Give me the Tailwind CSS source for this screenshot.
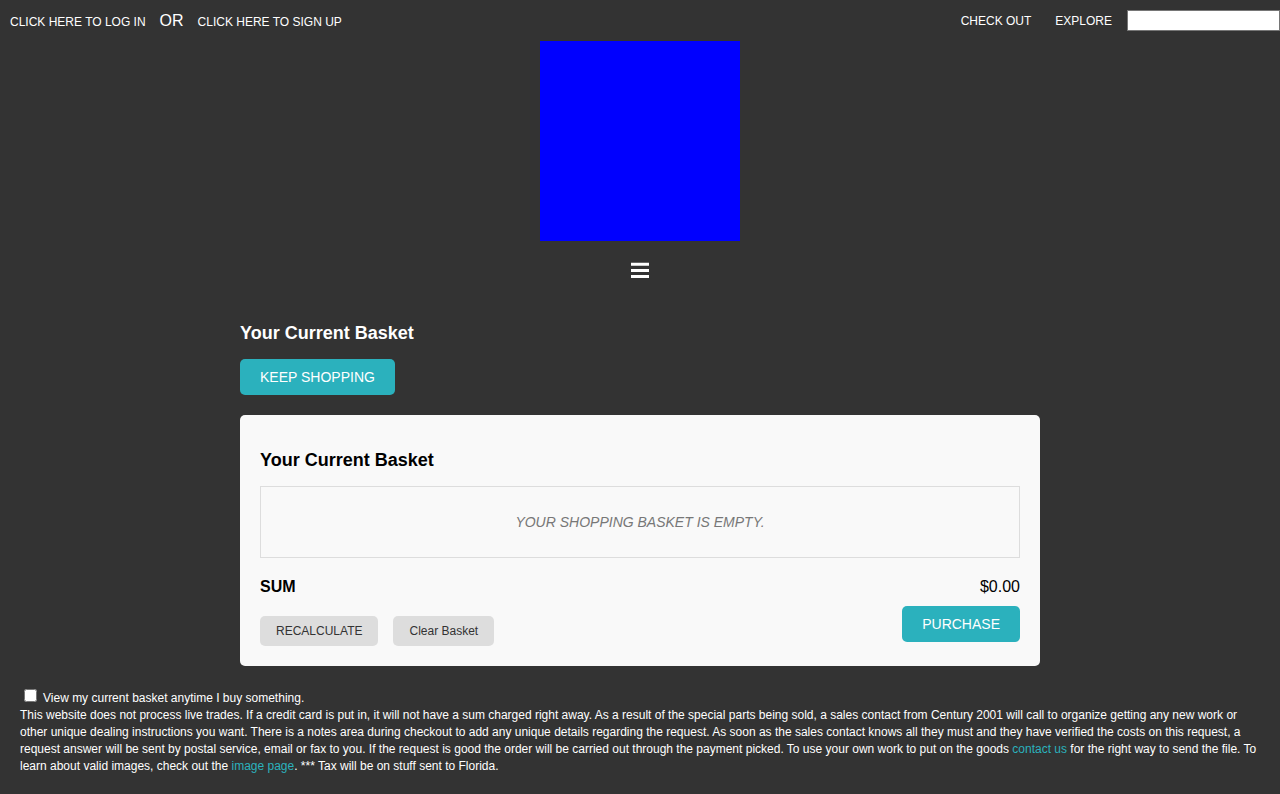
<!DOCTYPE html>
<html lang="en">
<head>
<meta charset="utf-8">
<meta name="viewport" content="width=device-width, initial-scale=1">
<title>Your Current Basket</title>
<script src="https://cdn.jsdelivr.net/npm/@tailwindcss/browser@4"></script>
</head>
<body class="min-h-screen bg-[#333] font-['Liberation_Sans',Arial,sans-serif] text-base text-white">
<header>
  <div class="flex h-[41px] items-center justify-between">
    <div class="flex items-baseline gap-[14px] pl-[10px]">
      <a href="#" class="text-xs">CLICK HERE TO LOG IN</a>
      <span>OR</span>
      <a href="#" class="text-xs">CLICK HERE TO SIGN UP</a>
    </div>
    <div class="flex items-center text-xs">
      <a href="#" class="mr-6">CHECK OUT</a>
      <a href="#" class="mr-[15px]">EXPLORE</a>
      <input type="text" aria-label="Search" class="h-[21px] w-[153px] border border-[#767676] bg-white px-0.5 text-black">
    </div>
  </div>
  <div class="mx-auto size-[200px] bg-[#00f]"></div>
  <div class="flex justify-center pt-5">
    <button type="button" aria-label="Menu" class="flex h-5 w-[18px] items-start">
      <svg width="18" height="18" viewBox="0 0 18 18" fill="#fff" aria-hidden="true"><path d="M0 1.7h18v3.1H0zM0 8h18v3H0zM0 14h18v3H0z"/></svg>
    </button>
  </div>
</header>
<main>
  <div class="mx-auto max-w-[800px] pt-10">
    <h1 class="text-lg leading-6 font-bold">Your Current Basket</h1>
    <a href="#" class="mt-[14px] inline-block rounded-[5px] bg-[#2bb1bd] px-5 py-2 align-top text-sm leading-5">KEEP SHOPPING</a>
    <section class="mt-5 rounded-[5px] bg-[#f9f9f9] p-5 text-black">
      <h2 class="pt-[13px] text-lg leading-6 font-bold">Your Current Basket</h2>
      <div class="mt-[14px] border border-[#ddd] py-[25px] text-center text-sm leading-5 text-[#777] italic">YOUR SHOPPING BASKET IS EMPTY.</div>
      <div class="mt-[18px] flex justify-between leading-[22px]">
        <strong>SUM</strong>
        <span>$0.00</span>
      </div>
      <div class="mt-2 flex items-start justify-between">
        <div class="flex gap-[15px] pt-[10px] text-xs leading-4 text-[#333]">
          <button type="button" class="rounded-[5px] bg-[#ddd] px-4 py-[7px]">RECALCULATE</button>
          <button type="button" class="rounded-[5px] bg-[#ddd] px-4 py-[7px]">Clear Basket</button>
        </div>
        <button type="button" class="rounded-[5px] bg-[#2bb1bd] px-5 py-2 text-sm leading-5 text-white">PURCHASE</button>
      </div>
    </section>
  </div>
  <div class="px-5 pt-5 pb-4 text-xs leading-[17px]">
    <div class="flex h-[21px] items-start">
      <input id="view-basket" type="checkbox" class="mt-[3px] mr-1.5 ml-1 size-[13px]">
      <label for="view-basket" class="pt-1">View my current basket anytime I buy something.</label>
    </div>
    <p>This website does not process live trades. If a credit card is put in, it will not have a sum charged right away. As a result of the special parts being sold, a sales contact from Century 2001 will call to organize getting any new work or other unique dealing instructions you want. There is a notes area during checkout to add any unique details regarding the request. As soon as the sales contact knows all they must and they have verified the costs on this request, a request answer will be sent by postal service, email or fax to you. If the request is good the order will be carried out through the payment picked. To use your own work to put on the goods <a href="#" class="text-[#2bb1bd]">contact us</a> for the right way to send the file. To learn about valid images, check out the <a href="#" class="text-[#2bb1bd]">image page</a>. *** Tax will be on stuff sent to Florida.</p>
  </div>
</main>
</body>
</html>
